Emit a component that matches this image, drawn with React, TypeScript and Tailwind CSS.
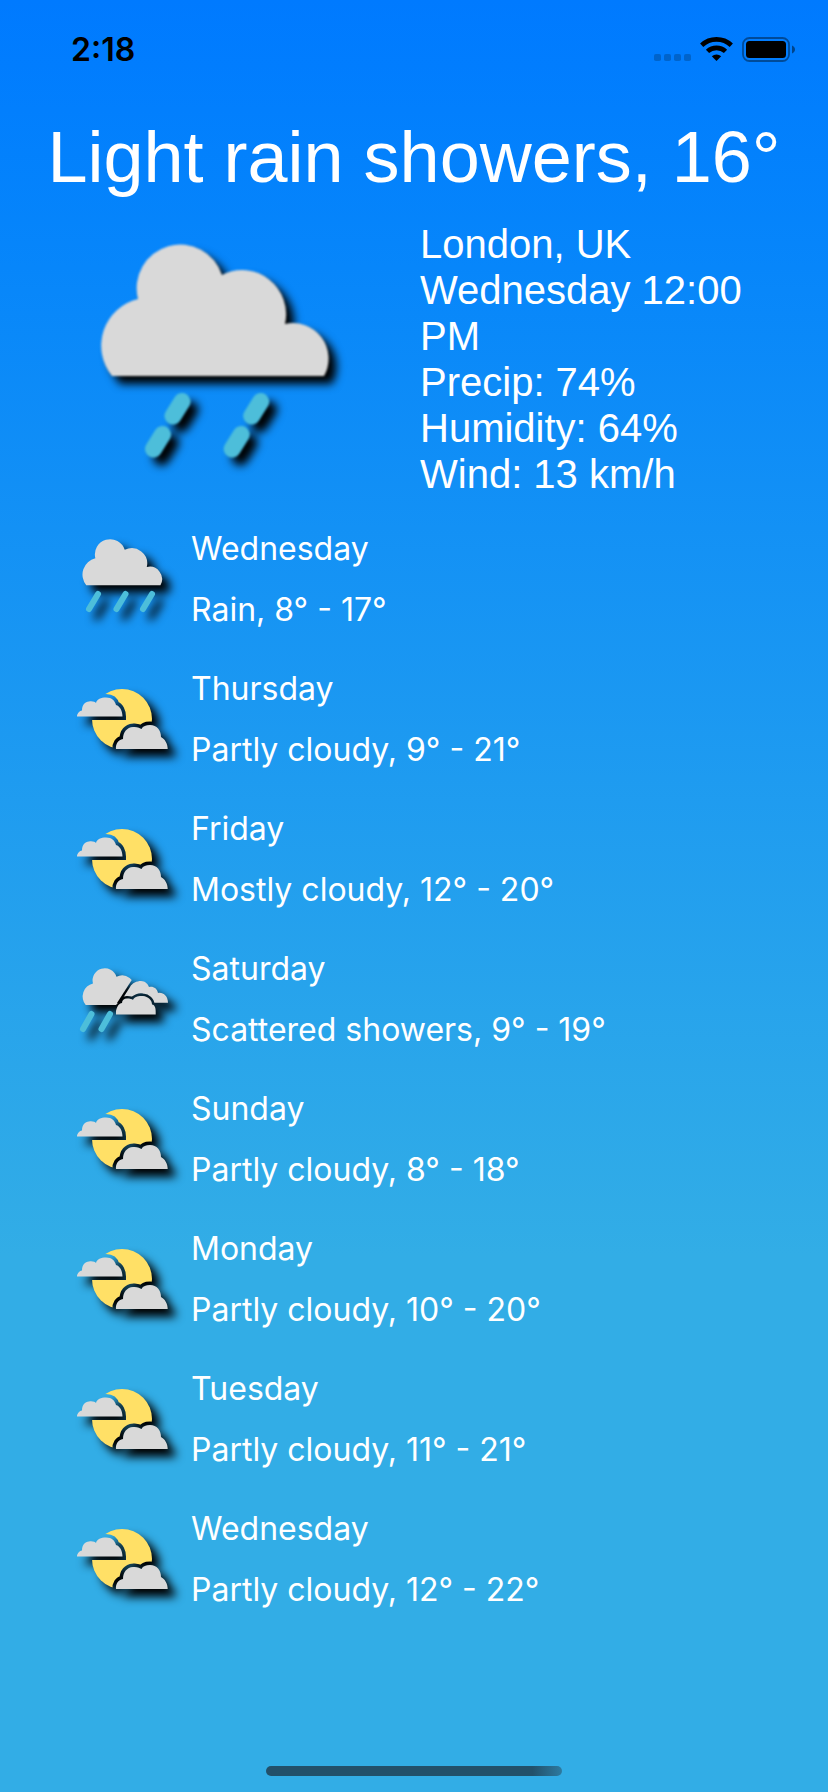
import React from "react";

type IconKind = "rain" | "partly" | "scattered";

interface DayForecast {
  day: string;
  summary: string;
  icon: IconKind;
}

const forecast: DayForecast[] = [
  { day: "Wednesday", summary: "Rain, 8° - 17°", icon: "rain" },
  { day: "Thursday", summary: "Partly cloudy, 9° - 21°", icon: "partly" },
  { day: "Friday", summary: "Mostly cloudy, 12° - 20°", icon: "partly" },
  { day: "Saturday", summary: "Scattered showers, 9° - 19°", icon: "scattered" },
  { day: "Sunday", summary: "Partly cloudy, 8° - 18°", icon: "partly" },
  { day: "Monday", summary: "Partly cloudy, 10° - 20°", icon: "partly" },
  { day: "Tuesday", summary: "Partly cloudy, 11° - 21°", icon: "partly" },
  { day: "Wednesday", summary: "Partly cloudy, 12° - 22°", icon: "partly" },
];

const conditions = [
  "London, UK",
  "Wednesday 12:00 PM",
  "Precip: 74%",
  "Humidity: 64%",
  "Wind: 13 km/h",
];

const CLOUD =
  "M31 156A48 48 0 0 1 57 79A43.7 43.7 0 0 1 141 55A44 44 0 0 1 204 104A35.5 35.5 0 0 1 243 156Z";
const GREY = "#d9d9d9";
const DROP = "#4dbeda";
const SUN = "#ffe066";

const smallIcon =
  "h-[102px] w-[100px] shrink-0 overflow-visible drop-shadow-[8px_8px_5px_#000]";

function LightRainIcon() {
  return (
    <svg
      viewBox="-15 1 280 276"
      className="h-[276px] w-[280px] overflow-visible blur-[1px] drop-shadow-[8px_8px_4px_#000]"
      aria-hidden="true"
    >
      <path d={CLOUD} fill={GREY} />
      <path
        d="M101 181.5L92 196M81.5 214.5L72.5 229M179.7 181.5L170.7 196M160.2 214.5L151.2 229"
        stroke={DROP}
        strokeWidth="17"
        strokeLinecap="round"
      />
    </svg>
  );
}

function RainIcon() {
  return (
    <svg viewBox="14 7 100 102" className={smallIcon} aria-hidden="true">
      <path d={CLOUD} fill={GREY} transform="translate(15.4 10.6) scale(.35)" />
      <path
        d="M38 74L29 89M65.5 74L56.5 89M92 74L83 89"
        stroke={DROP}
        strokeWidth="6"
        strokeLinecap="round"
      />
    </svg>
  );
}

function PartlyCloudyIcon({ id }: { id: string }) {
  const left =
    "M17 46.5C17 44 19 41 22 40.5C22 35 25 31.5 29 31.5C33 31 35 32 36 33C37 29 41 27.5 46 27.5C52 27.5 55 31 56 35C60 36 62.5 41 62.5 46.5Z";
  const right =
    "M56 79C55.5 74 58 70 63 69C63 62 67 57.5 73 57C77 56.5 80 58 81.5 59C83 56 86 55 90 55C97 55 101 60 101 67C105 69 107.7 74 107.7 79Z";
  return (
    <svg viewBox="14 -3 100 102" className={smallIcon} aria-hidden="true">
      <mask id={id} maskUnits="userSpaceOnUse" x="0" y="0" width="120" height="110">
        <rect width="120" height="110" fill="#fff" />
        <path d={left} fill="#000" stroke="#000" strokeWidth="7" />
        <path d={right} fill="#000" stroke="#000" strokeWidth="7" />
      </mask>
      <circle cx="62" cy="49" r="30" fill={SUN} mask={`url(#${id})`} />
      <path d={left} fill={GREY} />
      <path d={right} fill={GREY} />
    </svg>
  );
}

function ScatteredIcon({ id }: { id: string }) {
  const front =
    "M56 64.5V61C57 56 59 53.5 62 53C62 50 64 48.5 67 48.5C70 48.5 72 49 73 50C74 46.5 79 45.5 83 46C88 46.5 92 50 92 54.5C95 55 96 58 95.7 64.5Z";
  const back =
    "M60 52.7L70 37C72 33 77 31 81 31C85 31 88 34 89 37C93 36 97 38 98 43C103 42 108 46 108 52.7Z";
  return (
    <svg viewBox="14 -3 100 102" className={smallIcon} aria-hidden="true">
      <mask id={id + "f"} maskUnits="userSpaceOnUse" x="0" y="0" width="120" height="110">
        <rect width="120" height="110" fill="#fff" />
        <path d={front} fill="#000" stroke="#000" strokeWidth="5" />
      </mask>
      <mask id={id + "b"} maskUnits="userSpaceOnUse" x="0" y="0" width="120" height="110">
        <rect width="120" height="110" fill="#fff" />
        <path d={front} fill="#000" stroke="#000" strokeWidth="4" />
        <path d="M73 28L57 53H120V28Z" fill="#000" />
      </mask>
      <g mask={`url(#${id}b)`}>
        <path d={CLOUD} fill={GREY} transform="translate(17 11.3) scale(.28)" />
      </g>
      <path d={back} fill={GREY} mask={`url(#${id}f)`} />
      <path d={front} fill={GREY} />
      <path
        d="M31.5 64L23 79M50 64L41.5 79"
        stroke={DROP}
        strokeWidth="6"
        strokeLinecap="round"
      />
    </svg>
  );
}

function DayIcon({ kind, id }: { kind: IconKind; id: string }) {
  if (kind === "rain") return <RainIcon />;
  if (kind === "scattered") return <ScatteredIcon id={id} />;
  return <PartlyCloudyIcon id={id} />;
}

function StatusBar() {
  return (
    <div className="flex h-[88px] items-start justify-between pt-[37px] pr-[33px] pl-[71px] text-black">
      <span className="font-[Inter,sans-serif] text-[32px] leading-[26px] font-semibold">2:18</span>
      <div className="flex items-start gap-[9px]">
        <svg viewBox="0 0 37 24" className="h-6 w-[37px]" fill="#000" fillOpacity=".2" aria-hidden="true">
          <rect x="0" y="17" width="7" height="7" rx="1.8" />
          <rect x="10" y="17" width="7" height="7" rx="1.8" />
          <rect x="20" y="17" width="7" height="7" rx="1.8" />
          <rect x="30" y="17" width="7" height="7" rx="1.8" />
        </svg>
        <svg viewBox="0 0 33 24" className="h-6 w-[33px]" fill="none" stroke="#000" strokeWidth="4.7" aria-hidden="true">
          <path d="M1.7 8.2A21.7 21.7 0 0 1 31.3 8.2M7.5 14.4A13.2 13.2 0 0 1 25.5 14.4" />
          <path d="M16.5 24L11.8 19.2A7 7 0 0 1 21.2 19.2Z" fill="#000" stroke="none" />
        </svg>
        <svg viewBox="0 0 53 25" className="h-[25px] w-[53px]" aria-hidden="true">
          <rect x="1" y="1" width="46" height="23" rx="6.5" fill="none" stroke="#000" strokeOpacity=".4" strokeWidth="1.8" />
          <rect x="4" y="4" width="40" height="17" rx="3.5" fill="#000" />
          <path d="M50 8.5C54 10 54 15 50 16.5Z" fill="#000" fillOpacity=".45" />
        </svg>
      </div>
    </div>
  );
}

export default function App() {
  return (
    <div className="flex min-h-screen flex-col bg-linear-to-b from-[#007aff] to-[#32ade6] to-70% text-white">
      <StatusBar />
      <main className="flex flex-col pt-[27px]">
        <h1 className="px-8 text-center font-['Liberation_Sans',Arial,sans-serif] text-[72px] leading-[84px]">
          Light rain showers, 16°
        </h1>
        <section className="mt-[22px] grid grid-cols-2 gap-3">
          <div className="flex justify-center pl-1">
            <LightRainIcon />
          </div>
          <div className="pr-8 font-['Liberation_Sans',Arial,sans-serif] text-[40px] leading-[46px]">
            {conditions.map((line) => (
              <p key={line}>{line}</p>
            ))}
          </div>
        </section>
        <ul className="mt-[30px] flex flex-col gap-9 pr-8 pl-[74px]">
          {forecast.map((item, index) => (
            <li key={index} className="flex gap-[17px]">
              <DayIcon kind={item.icon} id={`day-${index}`} />
              <div className="flex flex-col gap-[19px] pt-px font-[Inter,sans-serif] text-[32px] leading-[42px]">
                <h2>{item.day}</h2>
                <p>{item.summary}</p>
              </div>
            </li>
          ))}
        </ul>
      </main>
      <div className="mt-auto flex justify-center pt-8 pb-4">
        <div className="h-[10px] w-[296px] rounded-full bg-linear-to-r from-[#22506a] from-90% to-[#2d7ba1]" />
      </div>
    </div>
  );
}
